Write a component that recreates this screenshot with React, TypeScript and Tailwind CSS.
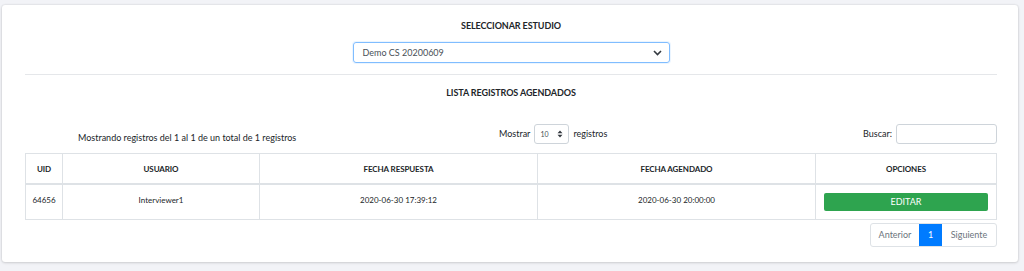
import React from "react";

const font = { fontFamily: "Lato, 'Open Sans', sans-serif" };

export default function App() {
  return (
    <div className="min-h-[271px] bg-[#f2f3f7] pt-[5px] pl-[2px] pr-[6px] pb-[9px]" style={font}>
      <div className="bg-white rounded-[3px] shadow-[0_0_2px_rgba(0,0,0,0.15),0_1px_3px_rgba(0,0,0,0.12)] h-[257px] pl-[23px] pr-[21px] pt-[14px] text-[#212529]">
        <div className="h-[13px] leading-[13px] text-center text-[9px] font-bold tracking-[-0.1px]">SELECCIONAR ESTUDIO</div>
        <div className="flex justify-center mt-[10px]">
          <div className="w-[317px] h-[21px] border border-[#80bdff] rounded-[3px] flex items-center justify-between pl-[9px] pr-[7px] text-[9px] text-[#495057] shadow-[0_0_0_1px_rgba(0,123,255,0.08)]">
            <span>Demo CS 20200609</span>
            <svg width="9" height="6" viewBox="0 0 9 6"><path d="M1 1l3.5 3.5L8 1" stroke="#343a40" strokeWidth="1.6" fill="none" /></svg>
          </div>
        </div>
        <div className="mt-[11px] border-t border-[#e5e7ea]" />
        <div className="mt-[11px] h-[13px] leading-[13px] text-center text-[9px] font-bold tracking-[-0.1px]">LISTA REGISTROS AGENDADOS</div>
        <div className="mt-[25px] h-[20px] flex items-center text-[9px]">
          <div className="w-[474px] pl-[53px] pt-[8px]">Mostrando registros del 1 al 1 de un total de 1 registros</div>
          <div className="flex items-center gap-[4px]">
            <span>Mostrar</span>
            <div className="w-[35px] h-[20px] border border-[#ced4da] rounded-[3px] flex items-center justify-between px-[5px] text-[7px] text-[#495057]">
              <span>10</span>
              <svg width="6" height="8" viewBox="0 0 6 8"><path d="M0.5 3.2L3 0.5 5.5 3.2z M0.5 4.8L3 7.5 5.5 4.8z" fill="#343a40" /></svg>
            </div>
            <span>registros</span>
          </div>
          <div className="flex-1 flex items-center justify-end gap-[4px]">
            <span>Buscar:</span>
            <div className="w-[101px] h-[20px] border border-[#ced4da] rounded-[3px]" />
          </div>
        </div>
        <div className="mt-[9px] border border-[#dee2e6] text-[8px]">
          <div className="grid grid-cols-[37px_197px_278px_278px_1fr] h-[31px] border-b-2 border-[#dee2e6] font-bold tracking-[-0.1px]">
            <div className="flex items-center justify-center border-r border-[#dee2e6]">UID</div>
            <div className="flex items-center justify-center border-r border-[#dee2e6]">USUARIO</div>
            <div className="flex items-center justify-center border-r border-[#dee2e6]">FECHA RESPUESTA</div>
            <div className="flex items-center justify-center border-r border-[#dee2e6]">FECHA AGENDADO</div>
            <div className="flex items-center justify-center">OPCIONES</div>
          </div>
          <div className="grid grid-cols-[37px_197px_278px_278px_1fr] h-[34px]">
            <div className="text-center pt-[9px] border-r border-[#dee2e6]">64656</div>
            <div className="text-center pt-[9px] border-r border-[#dee2e6]">Interviewer1</div>
            <div className="text-center pt-[9px] border-r border-[#dee2e6]">2020-06-30 17:39:12</div>
            <div className="text-center pt-[9px] border-r border-[#dee2e6]">2020-06-30 20:00:00</div>
            <div className="px-[8px] pt-[8px]">
              <div className="h-[18px] bg-[#2ea44f] rounded-[2px] text-white text-[9px] flex items-center justify-center">EDITAR</div>
            </div>
          </div>
        </div>
        <div className="mt-[3px] flex justify-end">
          <div className="flex h-[24px] border border-[#dee2e6] rounded-[3px] text-[9px] overflow-hidden">
            <div className="w-[48px] flex items-center justify-center text-[#6c757d]">Anterior</div>
            <div className="w-[23px] flex items-center justify-center bg-[#007bff] text-white">1</div>
            <div className="w-[54px] flex items-center justify-center text-[#6c757d]">Siguiente</div>
          </div>
        </div>
      </div>
    </div>
  );
}
